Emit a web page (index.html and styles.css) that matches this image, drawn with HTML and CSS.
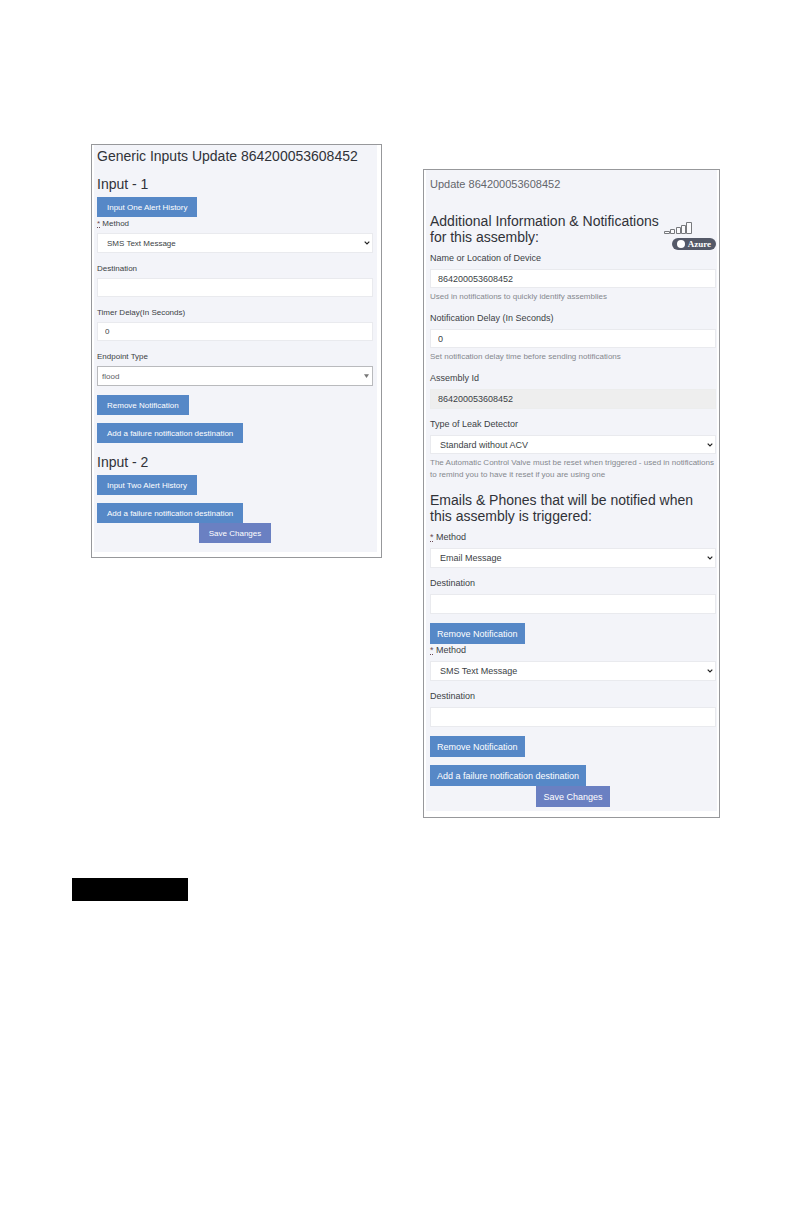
FILE: index.html
```html
<!DOCTYPE html>
<html lang="en">
<head>
<meta charset="utf-8">
<title>Update 864200053608452</title>
<link rel="stylesheet" href="styles.css">
</head>
<body>
<main class="page">
  <div class="panels">
    <section class="panel panel-inputs">
      <form class="form">
        <h1 class="title">Generic Inputs Update 864200053608452</h1>
        <h2 class="heading">Input - 1</h2>
        <button class="btn" type="button">Input One Alert History</button>
        <div class="group">
          <label class="label" for="in-method"><abbr class="req" title="required">*</abbr> Method</label>
          <div class="select">
            <select class="field" id="in-method"><option>SMS Text Message</option></select>
            <svg class="chevron" viewBox="0 0 6 4"><path d="M0.7 0.7 3 3 5.3 0.7"/></svg>
          </div>
        </div>
        <div class="group">
          <label class="label" for="in-dest">Destination</label>
          <input class="field short" id="in-dest" type="text">
        </div>
        <div class="group">
          <label class="label" for="in-delay">Timer Delay(In Seconds)</label>
          <input class="field short" id="in-delay" type="text" value="0">
        </div>
        <div class="group">
          <label class="label" for="in-type">Endpoint Type</label>
          <div class="select">
            <select class="field boxed" id="in-type"><option>flood</option></select>
            <svg class="triangle" viewBox="0 0 4 3"><path d="M0 0H4L2 3Z"/></svg>
          </div>
        </div>
        <div class="actions">
          <button class="btn" type="button">Remove Notification</button>
          <button class="btn" type="button">Add a failure notification destination</button>
        </div>
        <h2 class="heading">Input - 2</h2>
        <div class="actions">
          <button class="btn" type="button">Input Two Alert History</button>
          <button class="btn" type="button">Add a failure notification destination</button>
        </div>
        <button class="btn save" type="submit">Save Changes</button>
      </form>
    </section>

    <section class="panel panel-update">
      <form class="form">
        <h1 class="title">Update 864200053608452</h1>
        <header class="intro">
          <h2 class="heading">Additional Information &amp; Notifications<br>for this assembly:</h2>
          <div class="status">
            <svg class="signal" viewBox="0 0 28 12"><path d="M.5 9.5h5v2h-5zM6.5 7.5h4v4h-4zM12.5 5.5h4v6h-4zM17.5 3.5h4v8h-4zM22.5 .5h5v11h-5z"/></svg>
            <span class="badge"><i class="dot"></i>Azure</span>
          </div>
        </header>
        <div class="group">
          <label class="label" for="up-name">Name or Location of Device</label>
          <input class="field short" id="up-name" type="text" value="864200053608452">
          <p class="help">Used in notifications to quickly identify assemblies</p>
        </div>
        <div class="group">
          <label class="label" for="up-delay">Notification Delay (In Seconds)</label>
          <input class="field short" id="up-delay" type="text" value="0">
          <p class="help">Set notification delay time before sending notifications</p>
        </div>
        <div class="group">
          <label class="label" for="up-id">Assembly Id</label>
          <input class="field locked" id="up-id" type="text" value="864200053608452" readonly>
        </div>
        <div class="group">
          <label class="label" for="up-type">Type of Leak Detector</label>
          <div class="select">
            <select class="field short" id="up-type"><option>Standard without ACV</option></select>
            <svg class="chevron" viewBox="0 0 6 4"><path d="M0.7 0.7 3 3 5.3 0.7"/></svg>
          </div>
          <p class="help">The Automatic Control Valve must be reset when triggered - used in notifications to remind you to have it reset if you are using one</p>
        </div>
        <h2 class="heading">Emails &amp; Phones that will be notified when this assembly is triggered:</h2>
        <div class="group">
          <label class="label" for="up-method-1"><abbr class="req" title="required">*</abbr> Method</label>
          <div class="select">
            <select class="field" id="up-method-1"><option>Email Message</option></select>
            <svg class="chevron" viewBox="0 0 6 4"><path d="M0.7 0.7 3 3 5.3 0.7"/></svg>
          </div>
        </div>
        <div class="group">
          <label class="label" for="up-dest-1">Destination</label>
          <input class="field" id="up-dest-1" type="text">
        </div>
        <button class="btn" type="button">Remove Notification</button>
        <div class="group">
          <label class="label" for="up-method-2"><abbr class="req" title="required">*</abbr> Method</label>
          <div class="select">
            <select class="field" id="up-method-2"><option>SMS Text Message</option></select>
            <svg class="chevron" viewBox="0 0 6 4"><path d="M0.7 0.7 3 3 5.3 0.7"/></svg>
          </div>
        </div>
        <div class="group">
          <label class="label" for="up-dest-2">Destination</label>
          <input class="field" id="up-dest-2" type="text">
        </div>
        <div class="actions">
          <button class="btn" type="button">Remove Notification</button>
          <button class="btn" type="button">Add a failure notification destination</button>
        </div>
        <button class="btn save" type="submit">Save Changes</button>
      </form>
    </section>
  </div>
  <div class="bar"></div>
</main>
</body>
</html>
```
FILE: styles.css
```css
* {
  box-sizing: border-box;
}

body {
  margin: 0;
  background: #fff;
  color: #3c3f45;
  font-family: "Liberation Sans", Arial, sans-serif;
  font-size: 9px;
}

.page {
  padding: 144px 72px 72px;
}

.panels {
  display: grid;
  grid-template-columns: 291fr 297fr;
  gap: 41px;
  align-items: start;
  padding-left: 19px;
}

.panel {
  border: 1px solid #97989b;
  background: #fff;
}

.panel-inputs {
  --gap: 9px;
  --label-gap: 3px;
  --btn-gap: 8px;
  --btn-height: 20px;
  --btn-pad: 10px;
  padding: 0 4px 5px 2px;
  font-size: 8px;
}

.panel-update {
  --gap: 9px;
  --label-gap: 4px;
  --btn-gap: 8px;
  --btn-height: 21px;
  --btn-pad: 7px;
  margin-top: 25px;
  padding: 0 2px 6px 2px;
}

.form {
  display: flex;
  flex-direction: column;
  align-items: flex-start;
  background: #f3f4f9;
}

.panel-inputs .form {
  padding: 2px 4px 9px 3px;
}

.panel-update .form {
  padding: 6px 1px 4px 4px;
}

.title,
.heading {
  margin: 0;
  font-size: 14px;
  font-weight: 400;
  color: #303238;
}

.panel-inputs .title,
.panel-inputs .heading {
  line-height: 18px;
}

.panel-inputs .heading {
  margin: 10px 0 4px;
}

.panel-update .title {
  font-size: 11px;
  line-height: 16px;
  color: #64666c;
}

.panel-update .heading {
  margin: 2px 0 7px;
  line-height: 16px;
}

.intro {
  display: flex;
  justify-content: space-between;
  align-self: stretch;
  margin-top: 19px;
  white-space: nowrap;
}

.status {
  display: flex;
  flex-direction: column;
  align-items: flex-end;
  gap: 4px;
  width: 52px;
  padding-top: 11px;
}

.signal {
  align-self: flex-start;
  width: 28px;
  height: 12px;
  fill: #fbfbfd;
  stroke: #77797d;
}

.badge {
  display: flex;
  align-items: center;
  gap: 3px;
  height: 12px;
  padding: 0 5px;
  border-radius: 6px;
  background: #545968;
  color: #fff;
  font: 700 9px/12px "Liberation Serif", "Times New Roman", serif;
}

.dot {
  width: 8px;
  height: 8px;
  border-radius: 50%;
  background: #fff;
}

.group {
  align-self: stretch;
  margin-bottom: var(--gap);
}

.label {
  display: block;
  margin-bottom: var(--label-gap);
  line-height: 13px;
}

.req {
  color: #6a4a55;
  text-decoration: underline dotted;
}

.field {
  display: block;
  width: 100%;
  height: 20px;
  margin: 0;
  padding: 0 7px;
  border: 1px solid #e9eaee;
  border-radius: 0;
  background: #fff;
  color: inherit;
  font: inherit;
  appearance: none;
}

.short {
  height: 19px;
}

.locked {
  background: #eee;
  border-color: #eceded;
}

.select {
  position: relative;
}

.select .field {
  padding: 0 9px;
}

.select .boxed {
  padding: 0 4px;
  border-color: #b9babd;
  color: #606266;
}

.chevron,
.triangle {
  position: absolute;
  top: 50%;
  transform: translateY(-50%);
  pointer-events: none;
}

.chevron {
  right: 3px;
  width: 6px;
  height: 4px;
  fill: none;
  stroke: #222;
  stroke-width: 1.2;
}

.triangle {
  right: 4px;
  width: 5px;
  height: 4px;
  fill: #777;
}

.help {
  margin: 3px 0 0;
  color: #85888e;
  font-size: 8px;
  line-height: 12px;
}

.actions {
  display: flex;
  flex-direction: column;
  align-items: flex-start;
  gap: var(--btn-gap);
}

.btn {
  height: var(--btn-height);
  margin: 0;
  padding: 0 var(--btn-pad);
  border: 0;
  background: #5688c7;
  color: #fff;
  font: inherit;
  white-space: nowrap;
}

.save {
  align-self: center;
  background: #6a80c2;
}

.bar {
  width: 116px;
  height: 23px;
  margin-top: 60px;
  background: #000;
}
```
